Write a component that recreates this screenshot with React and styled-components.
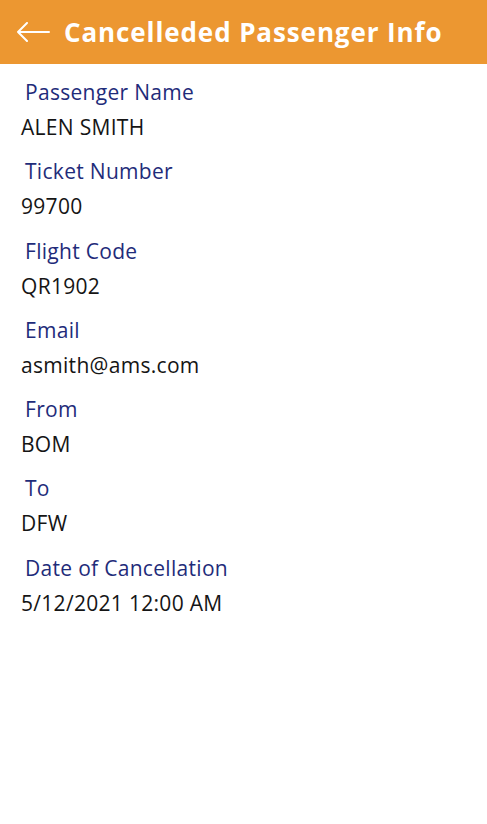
import React from "react";
import styled, { createGlobalStyle } from "styled-components";

const Global = createGlobalStyle`
  html, body { margin: 0; padding: 0; background: #ffffff; }
  body { font-family: "Open Sans", "Noto Sans", sans-serif; }
`;

const Page = styled.div`
  width: 487px;
  min-height: 824px;
  background: #ffffff;
`;

const Header = styled.header`
  height: 64px;
  background: #ec9731;
  display: flex;
  align-items: center;
  padding-left: 16px;
  gap: 14px;
  box-sizing: border-box;
`;

const BackButton = styled.button`
  border: none;
  background: none;
  padding: 0;
  display: flex;
  align-items: center;
  cursor: pointer;
`;

const Title = styled.h1`
  margin: 0;
  color: #ffffff;
  font-size: 26px;
  font-weight: 700;
  letter-spacing: 0.9px;
  line-height: 1;
`;

const List = styled.div`
  display: flex;
  flex-direction: column;
  padding-top: 14px;
`;

const Field = styled.div`
  display: flex;
  flex-direction: column;
  height: 79.3px;
`;

const Label = styled.div`
  color: #1f2c7a;
  font-size: 21px;
  letter-spacing: 0.3px;
  line-height: 28px;
  padding-left: 25px;
`;

const Value = styled.div`
  color: #151515;
  font-size: 21px;
  letter-spacing: 0.3px;
  line-height: 28px;
  padding-left: 21px;
  margin-top: 7px;
`;

const fields = [
  ["Passenger Name", "ALEN SMITH"],
  ["Ticket Number", "99700"],
  ["Flight Code", "QR1902"],
  ["Email", "asmith@ams.com"],
  ["From", "BOM"],
  ["To", "DFW"],
  ["Date of Cancellation", "5/12/2021 12:00 AM"],
];

export default function App() {
  return (
    <Page>
      <Global />
      <Header>
        <BackButton aria-label="Back">
          <svg width="34" height="20" viewBox="0 0 34 20" fill="none">
            <path d="M33 10H2M11 1L2 10l9 9" stroke="#fff" strokeWidth="2" strokeLinecap="round" strokeLinejoin="round" />
          </svg>
        </BackButton>
        <Title>Cancelleded Passenger Info</Title>
      </Header>
      <List>
        {fields.map(([l, v]) => (
          <Field key={l}>
            <Label>{l}</Label>
            <Value>{v}</Value>
          </Field>
        ))}
      </List>
    </Page>
  );
}
